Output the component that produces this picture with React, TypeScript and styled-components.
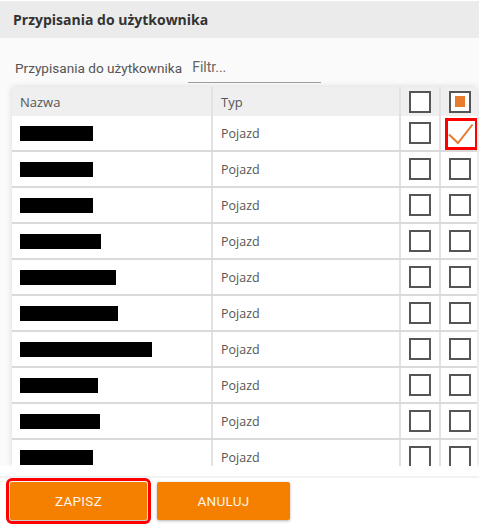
import React from 'react';
import styled, { createGlobalStyle } from 'styled-components';

const GlobalStyle = createGlobalStyle`
  html, body {
    margin: 0;
    padding: 0;
    background: #fff;
    font-family: Roboto, "Noto Sans", sans-serif;
  }
`;

const Page = styled.div`
  width: 479px;
  height: 528px;
  display: flex;
  flex-direction: column;
  overflow: hidden;
`;

const TitleBar = styled.div`
  height: 38px;
  flex: none;
  display: flex;
  align-items: center;
  padding-left: 13px;
  background: #ebebeb;
  color: #333;
  font-family: "Open Sans", sans-serif;
  font-weight: 700;
  font-size: 14px;
  border-top: 1px solid #fff;
  box-sizing: border-box;
`;

const Body = styled.div`
  height: 428px;
  flex: none;
  background: #fafafa;
  padding-left: 12px;
  display: flex;
  flex-direction: column;
  box-sizing: border-box;
`;

const FilterRow = styled.div`
  height: 49px;
  flex: none;
  display: flex;
  align-items: flex-end;
  padding: 0 0 4px 3px;
  box-sizing: border-box;
  font-size: 13.6px;
  line-height: 16px;
  color: #555;

  label {
    margin: 0 6px 7px 0;
  }
`;

const FilterInput = styled.input`
  width: 133px;
  height: 30px;
  border: 0;
  border-bottom: 1px solid #a0a0a0;
  background: transparent;
  padding: 6px 0 7px 4px;
  box-sizing: border-box;
  font-family: Roboto, sans-serif;
  font-size: 14px;
  line-height: 16px;
  outline: none;

  &::placeholder {
    color: #666;
  }
`;

const TableWrap = styled.div`
  width: 465px;
  flex: 1;
  overflow: hidden;
  background: #fff;
  border-radius: 2px 2px 0 0;
  box-shadow: 0 0 6px rgba(0, 0, 0, 0.14);
`;

const Table = styled.table`
  width: 100%;
  border-collapse: collapse;
  table-layout: fixed;
  font-family: "Open Sans", sans-serif;
  font-size: 12.5px;
  color: #555;
`;

const HeadCell = styled.th<{ $center?: boolean }>`
  height: 29px;
  padding: 0 0 0 8px;
  background: #efefef;
  font-weight: 400;
  font-size: 13px;
  text-align: ${p => (p.$center ? 'center' : 'left')};
  border-left: 2px solid #e2e2e2;
  &:first-child {
    border-left: 0;
  }
  ${p => p.$center && 'padding: 0;'}
`;

const Cell = styled.td<{ $center?: boolean }>`
  height: 34px;
  padding: 0 0 0 8px;
  border-bottom: 2px solid #dadada;
  border-left: 2px solid #e2e2e2;
  text-align: ${p => (p.$center ? 'center' : 'left')};
  vertical-align: middle;
  &:first-child {
    border-left: 0;
  }
  ${p => p.$center && 'padding: 0;'}
`;

const Redacted = styled.div<{ $w: number }>`
  width: ${p => p.$w}px;
  height: 15px;
  background: #000;
  margin-top: 1px;
`;

const Box = styled.span<{ $shift?: number }>`
  display: inline-block;
  vertical-align: middle;
  position: relative;
  width: 22px;
  height: 22px;
  border: 2px solid #555;
  box-sizing: border-box;
  background: #fff;
  margin-left: ${p => p.$shift ?? 0}px;
`;

const Partial = styled.span`
  position: absolute;
  left: 4px;
  top: 3px;
  width: 10px;
  height: 11px;
  background: #e87b2c;
`;

const Marked = styled.span`
  display: inline-block;
  vertical-align: middle;
  position: relative;
  width: 33px;
  height: 32px;
  margin-left: 4px;
  margin-top: 2px;
  border: 3px solid #f00;
  box-sizing: border-box;

  svg {
    position: absolute;
    left: 0;
    top: 0;
  }
`;

const Footer = styled.div`
  flex: 1;
  background: #fff;
  padding-top: 10px;
`;

const Actions = styled.div`
  border-top: 2px solid #f2f2f2;
  display: flex;
  gap: 10px;
  padding: 4px 0 0 10px;
`;

const Button = styled.button<{ $w: number; $marked?: boolean }>`
  width: ${p => p.$w}px;
  height: 38px;
  border: 0;
  border-radius: 2px;
  background: #f58000;
  color: #fff4ea;
  font-family: Roboto, sans-serif;
  font-weight: 400;
  font-size: 13.5px;
  letter-spacing: 0.3px;
  text-transform: uppercase;
  box-shadow: 0 1px 3px rgba(0, 0, 0, 0.3);
  cursor: pointer;
  ${p => p.$marked && 'outline: 3px solid #f00; outline-offset: 1px;'}
`;

const rows = [73, 73, 73, 81, 96, 98, 132, 78, 80, 73];

function Check() {
  return (
    <Marked>
      <svg width="27" height="26" viewBox="0 0 27 26">
        <polyline points="1,13.5 10,22 24.5,3.5" fill="none" stroke="#e8792b" strokeWidth="2" />
      </svg>
    </Marked>
  );
}

export default function App() {
  return (
    <Page>
      <GlobalStyle />
      <TitleBar>Przypisania do użytkownika</TitleBar>
      <Body>
        <FilterRow>
          <label>Przypisania do użytkownika</label>
          <FilterInput placeholder="Filtr..." />
        </FilterRow>
        <TableWrap>
          <Table>
            <colgroup>
              <col style={{ width: 200 }} />
              <col style={{ width: 188 }} />
              <col style={{ width: 40 }} />
              <col style={{ width: 37 }} />
            </colgroup>
            <thead>
              <tr>
                <HeadCell>Nazwa</HeadCell>
                <HeadCell>Typ</HeadCell>
                <HeadCell $center>
                  <Box />
                </HeadCell>
                <HeadCell $center>
                  <Box $shift={2}>
                    <Partial />
                  </Box>
                </HeadCell>
              </tr>
            </thead>
            <tbody>
              {rows.map((w, i) => (
                <tr key={i}>
                  <Cell>
                    <Redacted $w={w} />
                  </Cell>
                  <Cell>Pojazd</Cell>
                  <Cell $center>
                    <Box />
                  </Cell>
                  <Cell $center>{i === 0 ? <Check /> : <Box $shift={2} />}</Cell>
                </tr>
              ))}
            </tbody>
          </Table>
        </TableWrap>
      </Body>
      <Footer>
        <Actions>
          <Button $w={137} $marked>
            Zapisz
          </Button>
          <Button $w={133}>Anuluj</Button>
        </Actions>
      </Footer>
    </Page>
  );
}
